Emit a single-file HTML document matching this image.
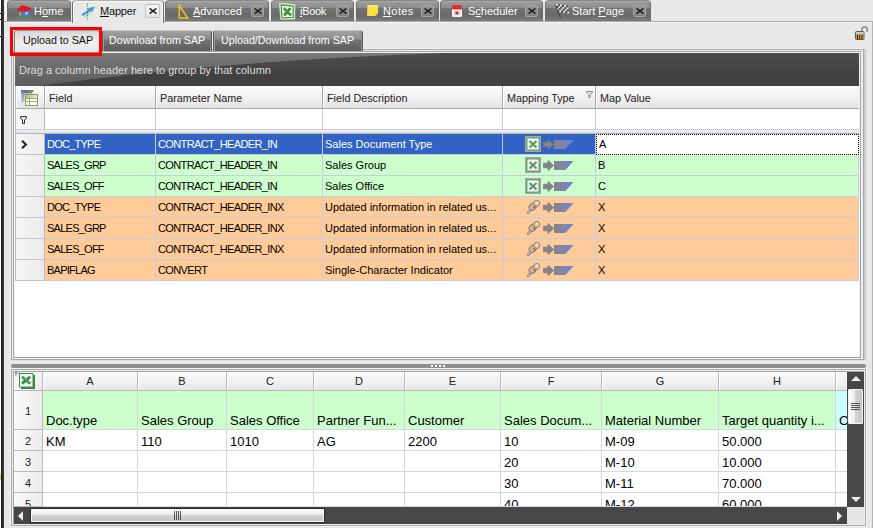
<!DOCTYPE html>
<html><head><meta charset="utf-8"><title>Mapper</title>
<style>
*{box-sizing:border-box;margin:0;padding:0}
html,body{width:873px;height:528px;overflow:hidden;background:#e8e8e8;font-family:"Liberation Sans",sans-serif;font-size:11px;color:#111}
.a{position:absolute}
u{text-decoration:underline;text-underline-offset:1px}
.tab{position:absolute;top:0;height:21px;border:1px solid #6c6c6c;border-top-color:#868686;border-bottom:none;border-radius:4px 4px 0 0;
 background:linear-gradient(#b6b6b6 0,#9c9c9c 1px,#8b8b8b 7px,#737373 7px,#696969 14px,#7b7b7b 20px);color:#fff;white-space:nowrap}
.tab .t{position:absolute;top:3px;line-height:14px;font-size:11px}
.tab.act{background:#e8e8e8;border-color:#6e6e6e;border-top-color:#b0b0b0;box-shadow:inset 1px 1px 0 #f8f8f8,inset -1px 0 0 #f8f8f8;color:#111;height:23px}
.xb{position:absolute;top:4px;width:13px;height:12px;border:1px solid #a4a4a4;border-radius:2px;background:linear-gradient(#979797,#828282)}
.tab.act .xb{background:linear-gradient(#f4f4f4,#e6e6e6);border-color:#c2c2c2;width:15px;height:14px;top:3px}
.xb svg{position:absolute;left:1.5px;top:2px}
.tab.act .xb svg{left:3px;top:3px}
.stab{position:absolute;top:30px;height:21px;border:1px solid #5e5e5e;border-top-color:#c4c4c4;border-bottom:none;border-radius:3px 3px 0 0;
 background:linear-gradient(#a2a2a2 0,#8c8c8c 8px,#747474 9px,#5e5e5e 19px);box-shadow:inset 1px 0 0 #9a9a9a,inset -1px 0 0 #888;color:#fff;line-height:18px;white-space:nowrap;font-size:10.7px}
.stab span{position:absolute;top:0}
.stab.act{background:linear-gradient(#c9cdcd 0,#dcdcdc 2px,#efefef 12px,#e6e6e6 20px);color:#111;border-color:#7c7c7c;border-top-color:#9aa0a0;box-shadow:none;height:23px}
.hd{position:absolute;top:86px;height:23px;background:linear-gradient(#fbfbfb,#f3f3f3 45%,#e3e3e3);border-right:1px solid #a9a9a9;border-bottom:1px solid #a9a9a9;line-height:25px;padding-left:4px;color:#222;white-space:nowrap;box-shadow:inset 1px 0 0 #fff;font-size:10.8px}
.fl{position:absolute;top:109px;height:21px;background:#fff;border-right:1px solid #c5cde0;border-bottom:1px solid #c5cde0}
.ind{position:absolute;left:16px;width:29px;height:21px;background:linear-gradient(90deg,#f6f6f6,#ebebeb);border-right:1px solid #b9b9b9;border-bottom:1px solid #c4c4c4}
.row{position:absolute;left:45px;width:814px;height:21px}
.c{position:absolute;top:0;height:21px;border-right:1px solid #c6cde0;border-bottom:1px solid #c6cde0;line-height:21px;padding-left:2px;white-space:nowrap;overflow:hidden;color:#000}
.g .c{background:#ccffcc}
.o .c{background:#ffcc99}
.s .c{background:#3163c5;color:#fff}
.c1{left:0;width:111px}.c2{left:111px;width:167px}.c3{left:278px;width:180px}.c4{left:458px;width:93px}.c5{left:551px;width:263px}
.up{letter-spacing:-0.62px}
.c1.up{letter-spacing:-0.75px}
.sh{position:absolute;top:372px;height:19px;background:linear-gradient(#fafafa,#f2f2f2 50%,#e6e6e6);border-right:1px solid #b9b9b9;border-bottom:1px solid #b9b9b9;text-align:center;line-height:19px;font-size:11px;color:#222;box-shadow:inset 1px 0 0 #fff}
.rh{position:absolute;left:14px;width:29px;background:linear-gradient(90deg,#fafafa,#ececec);border-right:1px solid #b9b9b9;border-bottom:1px solid #b9b9b9;text-align:center;font-size:11px;color:#222;overflow:hidden}
.sc{position:absolute;border-right:1px solid #d0d7e5;border-bottom:1px solid #d0d7e5;font-size:13px;padding-left:3px;white-space:nowrap;overflow:hidden;color:#000;background:#fff}
.sc.g{background:#ccffcc}
</style></head><body>
<div class="a" style="left:0;top:0;width:1px;height:528px;background:#fff"></div>
<div class="a" style="left:1px;top:0;width:3px;height:528px;background:linear-gradient(90deg,#111,#2e2e2e 1px,#3c3c3c)"></div>
<div class="a" style="left:0;top:13px;width:2px;height:1px;background:#000"></div>
<div class="a" style="left:0;top:19px;width:2px;height:1px;background:#000"></div>
<div class="a" style="left:0;top:36px;width:2px;height:1px;background:#000"></div>
<div class="a" style="left:4px;top:0;width:3px;height:22px;background:linear-gradient(90deg,#e2e2e2,#f6f6f6 1px)"></div>
<div class="a" style="left:0;top:474px;width:1px;height:6px;background:#e6cf6a"></div>
<div class="a" style="left:4px;top:21px;width:869px;height:1px;background:#a8a8a8"></div>
<div class="a" style="left:4px;top:22px;width:868px;height:1px;background:#f6f6f6"></div>
<div class="a" style="left:872px;top:21px;width:1px;height:507px;background:#b4b4b4"></div>
<div class="tab" style="left:7px;width:64px"><svg class="a" style="left:9px;top:4px" width="14" height="13" viewBox="0 0 14 13"><path d="M0 5L5 0L14 3L13.5 5.5L8 7Z" fill="#e8131b"/><path d="M1 5.5L6 7.5L6 12L1 10Z" fill="#2d6ed0"/><path d="M6 7.5L12.5 5.5L12.5 10L6 12Z" fill="#3a86e0"/><path d="M2.2 6.5L4.5 7.4L4.5 11.2L2.2 10.3Z" fill="#f08a1a"/><path d="M8.5 7.5L10.5 6.8L10.5 9L8.5 9.6Z" fill="#cfe4fa"/><path d="M0.5 10.5L6 12.5L13 10.2L13 11.2L6 13L0.5 11.5Z" fill="#3fae3a"/></svg><span class="t" style="left:26px">H<u>o</u>me</span></div>
<div class="tab act" style="left:72px;width:92px"><svg class="a" style="left:8px;top:2px" width="16" height="17" viewBox="0 0 16 17"><path d="M0 11.5L7 7L6 5.5L14 3.5L11 9.5L10 8L2 13Z" fill="#4a9bd6"/><path d="M3 14L10 10" stroke="#9cc6e8" stroke-width="1"/><path d="M6.5 0.5V17" stroke="#35b857" stroke-width="1.1" stroke-dasharray="1.4 0.8"/></svg><span class="t" style="left:27px"><span style="letter-spacing:-0.2px"><u>M</u>apper</span></span><span class="xb" style="left:72px"><svg width="8" height="6" viewBox="0 0 8 6"><path d="M0.6 0.4L7.4 5.6M7.4 0.4L0.6 5.6" stroke="#1c1c1c" stroke-width="1.5" fill="none"/></svg></span></div>
<div class="tab" style="left:165px;width:104px"><svg class="a" style="left:12px;top:3px" width="11" height="15" viewBox="0 0 11 15"><path d="M1.2 1.5L9.8 14L1.2 14Z" fill="none" stroke="#ecc522" stroke-width="1.5" stroke-linejoin="miter"/></svg><span class="t" style="left:27px"><u>A</u>dvanced</span><span class="xb" style="left:85px"><svg width="8" height="6" viewBox="0 0 8 6"><path d="M0.6 0.4L7.4 5.6M7.4 0.4L0.6 5.6" stroke="#1c1c1c" stroke-width="1.5" fill="none"/></svg></span></div>
<div class="tab" style="left:271px;width:83px"><svg class="a" style="left:7px;top:1px" width="17" height="18" viewBox="0 0 17 18"><path d="M0.5 1.2L15.8 2.6L15.8 17L1.6 17.2Z" fill="#f2f7f0" stroke="#d4e4d2" stroke-width="0.8"/><path d="M2.2 3L14.2 4.2L14.2 15.4L3 15.8Z" fill="#fbfdfa" stroke="#4a9a3c" stroke-width="1.3"/><path d="M4.8 6L12.2 13.4M11.4 6L5.2 13.4" stroke="#2e8c30" stroke-width="2.6"/><path d="M5.5 6L11.5 12" stroke="#86c886" stroke-width="0.7"/></svg><span class="t" style="left:28px"><span style="letter-spacing:-0.3px"><u>i</u>Book</span></span><span class="xb" style="left:64px"><svg width="8" height="6" viewBox="0 0 8 6"><path d="M0.6 0.4L7.4 5.6M7.4 0.4L0.6 5.6" stroke="#1c1c1c" stroke-width="1.5" fill="none"/></svg></span></div>
<div class="tab" style="left:356px;width:83px"><svg class="a" style="left:10px;top:4px" width="11" height="11" viewBox="0 0 11 11"><path d="M0.5 0H11V8.5L8.5 11H0Z" fill="#f8e244"/><path d="M11 8.5L8.5 11V8.5Z" fill="#c8a818"/><path d="M0.5 0H11V1.5H0.4Z" fill="#fbee8a"/></svg><span class="t" style="left:26px"><span style="letter-spacing:0.4px"><u>N</u>otes</span></span><span class="xb" style="left:64px"><svg width="8" height="6" viewBox="0 0 8 6"><path d="M0.6 0.4L7.4 5.6M7.4 0.4L0.6 5.6" stroke="#1c1c1c" stroke-width="1.5" fill="none"/></svg></span></div>
<div class="tab" style="left:440px;width:103px"><svg class="a" style="left:11px;top:4px" width="10" height="12" viewBox="0 0 10 12"><rect x="0" y="0" width="10" height="12" rx="1.2" fill="#f4f4f4"/><rect x="0" y="0" width="10" height="4.5" rx="1.2" fill="#e0302c"/><rect x="2.5" y="6" width="5" height="4" fill="#d99"/><rect x="4" y="7" width="2" height="2" fill="#a33"/></svg><span class="t" style="left:27px">S<u>c</u>heduler</span><span class="xb" style="left:84px"><svg width="8" height="6" viewBox="0 0 8 6"><path d="M0.6 0.4L7.4 5.6M7.4 0.4L0.6 5.6" stroke="#1c1c1c" stroke-width="1.5" fill="none"/></svg></span></div>
<div class="tab" style="left:545px;width:106px"><svg class="a" style="left:8px;top:2px" width="16" height="16" viewBox="0 0 16 16"><rect x="2.0" y="1.0" width="2" height="2" fill="#e4e4e4"/><rect x="4.0" y="1.3" width="2" height="2" fill="#4a4a4a"/><rect x="6.0" y="1.6" width="2" height="2" fill="#e4e4e4"/><rect x="8.0" y="1.9" width="2" height="2" fill="#4a4a4a"/><rect x="10.0" y="2.2" width="2" height="2" fill="#e4e4e4"/><rect x="12.0" y="2.5" width="2" height="2" fill="#4a4a4a"/><rect x="2.4" y="3.0" width="2" height="2" fill="#4a4a4a"/><rect x="4.4" y="3.3" width="2" height="2" fill="#e4e4e4"/><rect x="6.4" y="3.6" width="2" height="2" fill="#4a4a4a"/><rect x="8.4" y="3.9" width="2" height="2" fill="#e4e4e4"/><rect x="10.4" y="4.2" width="2" height="2" fill="#4a4a4a"/><rect x="12.4" y="4.5" width="2" height="2" fill="#e4e4e4"/><rect x="2.8" y="5.0" width="2" height="2" fill="#e4e4e4"/><rect x="4.8" y="5.3" width="2" height="2" fill="#4a4a4a"/><rect x="6.8" y="5.6" width="2" height="2" fill="#e4e4e4"/><rect x="8.8" y="5.9" width="2" height="2" fill="#4a4a4a"/><rect x="10.8" y="6.2" width="2" height="2" fill="#e4e4e4"/><rect x="12.8" y="6.5" width="2" height="2" fill="#4a4a4a"/><rect x="3.2" y="7.0" width="2" height="2" fill="#4a4a4a"/><rect x="5.2" y="7.3" width="2" height="2" fill="#e4e4e4"/><rect x="7.2" y="7.6" width="2" height="2" fill="#4a4a4a"/><rect x="9.2" y="7.9" width="2" height="2" fill="#e4e4e4"/><rect x="11.2" y="8.2" width="2" height="2" fill="#4a4a4a"/><rect x="13.2" y="8.5" width="2" height="2" fill="#e4e4e4"/><path d="M1.5 2L6.5 15" stroke="#444" stroke-width="1.1"/></svg><span class="t" style="left:26px">Start <u>P</u>age</span><span class="xb" style="left:87px"><svg width="8" height="6" viewBox="0 0 8 6"><path d="M0.6 0.4L7.4 5.6M7.4 0.4L0.6 5.6" stroke="#1c1c1c" stroke-width="1.5" fill="none"/></svg></span></div>
<svg class="a" style="left:855px;top:26px" width="14" height="14" viewBox="0 0 14 14"><path d="M7 7V3.6A2.6 2.6 0 0 1 12.2 3.6V6" fill="none" stroke="#8a8a8a" stroke-width="1.5"/><rect x="0.5" y="5.5" width="8.5" height="8" rx="1" fill="#9a9a9a" stroke="#5a5a5a"/><rect x="1" y="9" width="7.5" height="4" fill="#e8921a"/><path d="M2.5 9V13M4.7 9V13M6.9 9V13" stroke="#3a2a10" stroke-width="1"/><rect x="1" y="6" width="7.5" height="2" fill="#c9c9c9"/></svg>
<div class="a" style="left:10px;top:48px;width:855px;height:314px;border:1px solid #f0f0f0"></div>
<div class="a" style="left:11px;top:49px;width:853px;height:311px;border:1px solid #a8a8a8;background:#eee;box-shadow:1px 0 0 #c6c6c6,2px 0 0 #d4d4d4,3px 0 0 #dfdfdf,0 1px 0 #dcdcdc"></div>
<div class="a" style="left:13px;top:51px;width:848px;height:307px;border:1px solid #a4a4a4;background:#f2f2f2"></div>
<div class="a" style="left:15px;top:53px;width:844px;height:304px;background:#fff"></div>
<div class="stab act" style="left:14px;width:86px"><span style="left:8px">Upload to SAP</span></div>
<div class="stab" style="left:102px;width:110px"><span style="left:6px">Download from SAP</span></div>
<div class="stab" style="left:213px;width:150px"><span style="left:7px">Upload/Download from SAP</span></div>
<div class="a" style="left:15px;top:53px;width:844px;height:33px;background:linear-gradient(#4c4c4c,#404040 70%,#424242)"></div>
<svg class="a" style="left:15px;top:53px" width="844" height="33" viewBox="0 0 844 33"><defs><linearGradient id="gl" x1="0" x2="0" y1="0" y2="1"><stop offset="0" stop-color="#787878"/><stop offset="1" stop-color="#5c5c5c"/></linearGradient></defs><path d="M0 0H430Q200 8 25 33H0Z" fill="url(#gl)"/></svg>
<div class="a" style="left:19px;top:53px;height:33px;line-height:34px;color:#dcdcdc;white-space:nowrap;font-size:11px">Drag a column header here to group by that column</div>
<div class="hd" style="left:16px;width:29px;border-top-left-radius:4px"></div>
<div class="hd" style="left:45px;width:111px">Field</div>
<div class="hd" style="left:156px;width:167px">Parameter Name</div>
<div class="hd" style="left:323px;width:180px">Field Description</div>
<div class="hd" style="left:503px;width:93px">Mapping Type</div>
<div class="hd" style="left:596px;width:263px;border-top-right-radius:4px;border-right:none">Map Value</div>
<div class="fl" style="left:16px;width:29px;background:linear-gradient(90deg,#f8f8f8,#ededed);border-right-color:#b9b9b9"></div>
<div class="fl" style="left:45px;width:111px"></div>
<div class="fl" style="left:156px;width:167px"></div>
<div class="fl" style="left:323px;width:180px"></div>
<div class="fl" style="left:503px;width:93px"></div>
<div class="fl" style="left:596px;width:263px;border-right:none"></div>
<div class="a" style="left:15px;top:86px;width:1px;height:195px;background:#bdbdbd"></div>
<svg class="a" style="left:21px;top:90px" width="17" height="16" viewBox="0 0 17 16"><defs><linearGradient id="hi1" x1="0" x2="1"><stop offset="0" stop-color="#5c6480"/><stop offset="1" stop-color="#8c8c8c"/></linearGradient><linearGradient id="hi2" x1="0" x2="0" y1="0" y2="1"><stop offset="0" stop-color="#7880c0"/><stop offset="1" stop-color="#c4c6d4"/></linearGradient><linearGradient id="hi3" x1="0" x2="1"><stop offset="0" stop-color="#b4c070"/><stop offset="1" stop-color="#ecebc4"/></linearGradient></defs><path d="M0 0H13L11 3.5H0Z" fill="url(#hi1)"/><path d="M0.5 1H3.5V11L0.5 13.5Z" fill="url(#hi2)"/><rect x="4.5" y="4.5" width="12" height="11" fill="#fcfcf6" stroke="#8c9c66"/><rect x="5" y="5" width="11" height="3.2" fill="url(#hi3)"/><path d="M5 11.5H16M8.5 8.2V15" stroke="#9aa884" stroke-width="1"/><path d="M5 8.5H16" stroke="#8c9c66" stroke-width="0.8"/></svg>
<svg class="a" style="left:20px;top:116px" width="7" height="8" viewBox="0 0 7 8"><path d="M0.6 0.6H6.4V2L4.5 4V7.4H2.5V4L0.6 2Z" fill="#fff" stroke="#222" stroke-width="1"/></svg>
<svg class="a" style="left:586px;top:91px" width="7" height="7" viewBox="0 0 7 7"><path d="M0.5 0.5H6.5V1.5L4.3 3.5V6.5H2.7V3.5L0.5 1.5Z" fill="#e4e4e4" stroke="#8e8e8e" stroke-width="1"/></svg>
<div class="a" style="left:16px;top:130px;width:843px;height:4px;background:linear-gradient(#f0f0f0,#e0e0e0);border-bottom:1px solid #b4b4b4"></div>
<div class="ind" style="top:134px"></div>
<div class="row s" style="top:134px"><div class="c c1 up">DOC_TYPE</div><div class="c c2 up">CONTRACT_HEADER_IN</div><div class="c c3">Sales Document Type</div><div class="c c4"><svg class="a" style="left:22px;top:2px" width="16" height="16" viewBox="0 0 16 16"><rect x="0.5" y="0.5" width="15" height="15" fill="#7f9a82" stroke="#9db09f"/><rect x="2.5" y="2.5" width="11" height="11" fill="#f2f5f0"/><path d="M4.5 5L11.5 11.5M11.5 5L4.5 11.5" stroke="#4f9a5c" stroke-width="2"/></svg><svg class="a" style="left:40px;top:5px" width="11" height="11" viewBox="0 0 11 11"><path d="M0.4 3.2H5V0.4L10.6 5.5L5 10.6V7.8H0.4Z" fill="#858585" stroke="#74748a" stroke-width="0.7"/></svg><svg class="a" style="left:51px;top:6px" width="20" height="9" viewBox="0 0 20 9"><defs><linearGradient id="fg0" x1="0" x2="1"><stop offset="0" stop-color="#83838d"/><stop offset="0.45" stop-color="#8284a6"/><stop offset="1" stop-color="#6a86d8"/></linearGradient></defs><path d="M0 0H19.5L11.5 9H0Z" fill="url(#fg0)"/></svg></div><div class="c c5" style="background:#fff;color:#000;border:1px dotted #000;line-height:19px;padding-left:2px">A</div></div>
<div class="ind" style="top:155px"></div>
<div class="row g" style="top:155px"><div class="c c1 up">SALES_GRP</div><div class="c c2 up">CONTRACT_HEADER_IN</div><div class="c c3">Sales Group</div><div class="c c4"><svg class="a" style="left:22px;top:2px" width="16" height="16" viewBox="0 0 16 16"><rect x="0.5" y="0.5" width="15" height="15" fill="#7f9a82" stroke="#9db09f"/><rect x="2.5" y="2.5" width="11" height="11" fill="#f2f5f0"/><path d="M4.5 5L11.5 11.5M11.5 5L4.5 11.5" stroke="#4f9a5c" stroke-width="2"/></svg><svg class="a" style="left:40px;top:5px" width="11" height="11" viewBox="0 0 11 11"><path d="M0.4 3.2H5V0.4L10.6 5.5L5 10.6V7.8H0.4Z" fill="#858585" stroke="#74748a" stroke-width="0.7"/></svg><svg class="a" style="left:51px;top:6px" width="20" height="9" viewBox="0 0 20 9"><defs><linearGradient id="fg1" x1="0" x2="1"><stop offset="0" stop-color="#83838d"/><stop offset="0.45" stop-color="#8284a6"/><stop offset="1" stop-color="#6a86d8"/></linearGradient></defs><path d="M0 0H19.5L11.5 9H0Z" fill="url(#fg1)"/></svg></div><div class="c c5">B</div></div>
<div class="ind" style="top:176px"></div>
<div class="row g" style="top:176px"><div class="c c1 up">SALES_OFF</div><div class="c c2 up">CONTRACT_HEADER_IN</div><div class="c c3">Sales Office</div><div class="c c4"><svg class="a" style="left:22px;top:2px" width="16" height="16" viewBox="0 0 16 16"><rect x="0.5" y="0.5" width="15" height="15" fill="#7f9a82" stroke="#9db09f"/><rect x="2.5" y="2.5" width="11" height="11" fill="#f2f5f0"/><path d="M4.5 5L11.5 11.5M11.5 5L4.5 11.5" stroke="#4f9a5c" stroke-width="2"/></svg><svg class="a" style="left:40px;top:5px" width="11" height="11" viewBox="0 0 11 11"><path d="M0.4 3.2H5V0.4L10.6 5.5L5 10.6V7.8H0.4Z" fill="#858585" stroke="#74748a" stroke-width="0.7"/></svg><svg class="a" style="left:51px;top:6px" width="20" height="9" viewBox="0 0 20 9"><defs><linearGradient id="fg2" x1="0" x2="1"><stop offset="0" stop-color="#83838d"/><stop offset="0.45" stop-color="#8284a6"/><stop offset="1" stop-color="#6a86d8"/></linearGradient></defs><path d="M0 0H19.5L11.5 9H0Z" fill="url(#fg2)"/></svg></div><div class="c c5">C</div></div>
<div class="ind" style="top:197px"></div>
<div class="row o" style="top:197px"><div class="c c1 up">DOC_TYPE</div><div class="c c2 up">CONTRACT_HEADER_INX</div><div class="c c3">Updated information in related us...</div><div class="c c4"><svg class="a" style="left:24px;top:3px" width="14" height="14" viewBox="0 0 14 14"><path d="M0.9 13.1L4.4 9.4" stroke="#7c74a0" stroke-width="2.4" stroke-linecap="round"/><path d="M1 13L4.2 9.6" stroke="#f4ead0" stroke-width="1" stroke-linecap="round"/><ellipse cx="5.7" cy="6.7" rx="3.9" ry="3.1" transform="rotate(-40 5.7 6.7)" fill="#dbb976" stroke="#7c7498" stroke-width="1"/><circle cx="9.7" cy="3.4" r="3" fill="#e9cf96" stroke="#7c7498" stroke-width="1"/><path d="M6.2 6.3L8.6 8.2" stroke="#7a6a58" stroke-width="1.1"/><circle cx="10.3" cy="2.6" r="1.1" fill="#f6e8c4"/></svg><svg class="a" style="left:40px;top:5px" width="11" height="11" viewBox="0 0 11 11"><path d="M0.4 3.2H5V0.4L10.6 5.5L5 10.6V7.8H0.4Z" fill="#858585" stroke="#74748a" stroke-width="0.7"/></svg><svg class="a" style="left:51px;top:6px" width="20" height="9" viewBox="0 0 20 9"><defs><linearGradient id="fg3" x1="0" x2="1"><stop offset="0" stop-color="#83838d"/><stop offset="0.45" stop-color="#8284a6"/><stop offset="1" stop-color="#6a86d8"/></linearGradient></defs><path d="M0 0H19.5L11.5 9H0Z" fill="url(#fg3)"/></svg></div><div class="c c5">X</div></div>
<div class="ind" style="top:218px"></div>
<div class="row o" style="top:218px"><div class="c c1 up">SALES_GRP</div><div class="c c2 up">CONTRACT_HEADER_INX</div><div class="c c3">Updated information in related us...</div><div class="c c4"><svg class="a" style="left:24px;top:3px" width="14" height="14" viewBox="0 0 14 14"><path d="M0.9 13.1L4.4 9.4" stroke="#7c74a0" stroke-width="2.4" stroke-linecap="round"/><path d="M1 13L4.2 9.6" stroke="#f4ead0" stroke-width="1" stroke-linecap="round"/><ellipse cx="5.7" cy="6.7" rx="3.9" ry="3.1" transform="rotate(-40 5.7 6.7)" fill="#dbb976" stroke="#7c7498" stroke-width="1"/><circle cx="9.7" cy="3.4" r="3" fill="#e9cf96" stroke="#7c7498" stroke-width="1"/><path d="M6.2 6.3L8.6 8.2" stroke="#7a6a58" stroke-width="1.1"/><circle cx="10.3" cy="2.6" r="1.1" fill="#f6e8c4"/></svg><svg class="a" style="left:40px;top:5px" width="11" height="11" viewBox="0 0 11 11"><path d="M0.4 3.2H5V0.4L10.6 5.5L5 10.6V7.8H0.4Z" fill="#858585" stroke="#74748a" stroke-width="0.7"/></svg><svg class="a" style="left:51px;top:6px" width="20" height="9" viewBox="0 0 20 9"><defs><linearGradient id="fg4" x1="0" x2="1"><stop offset="0" stop-color="#83838d"/><stop offset="0.45" stop-color="#8284a6"/><stop offset="1" stop-color="#6a86d8"/></linearGradient></defs><path d="M0 0H19.5L11.5 9H0Z" fill="url(#fg4)"/></svg></div><div class="c c5">X</div></div>
<div class="ind" style="top:239px"></div>
<div class="row o" style="top:239px"><div class="c c1 up">SALES_OFF</div><div class="c c2 up">CONTRACT_HEADER_INX</div><div class="c c3">Updated information in related us...</div><div class="c c4"><svg class="a" style="left:24px;top:3px" width="14" height="14" viewBox="0 0 14 14"><path d="M0.9 13.1L4.4 9.4" stroke="#7c74a0" stroke-width="2.4" stroke-linecap="round"/><path d="M1 13L4.2 9.6" stroke="#f4ead0" stroke-width="1" stroke-linecap="round"/><ellipse cx="5.7" cy="6.7" rx="3.9" ry="3.1" transform="rotate(-40 5.7 6.7)" fill="#dbb976" stroke="#7c7498" stroke-width="1"/><circle cx="9.7" cy="3.4" r="3" fill="#e9cf96" stroke="#7c7498" stroke-width="1"/><path d="M6.2 6.3L8.6 8.2" stroke="#7a6a58" stroke-width="1.1"/><circle cx="10.3" cy="2.6" r="1.1" fill="#f6e8c4"/></svg><svg class="a" style="left:40px;top:5px" width="11" height="11" viewBox="0 0 11 11"><path d="M0.4 3.2H5V0.4L10.6 5.5L5 10.6V7.8H0.4Z" fill="#858585" stroke="#74748a" stroke-width="0.7"/></svg><svg class="a" style="left:51px;top:6px" width="20" height="9" viewBox="0 0 20 9"><defs><linearGradient id="fg5" x1="0" x2="1"><stop offset="0" stop-color="#83838d"/><stop offset="0.45" stop-color="#8284a6"/><stop offset="1" stop-color="#6a86d8"/></linearGradient></defs><path d="M0 0H19.5L11.5 9H0Z" fill="url(#fg5)"/></svg></div><div class="c c5">X</div></div>
<div class="ind" style="top:260px"></div>
<div class="row o" style="top:260px"><div class="c c1 up">BAPIFLAG</div><div class="c c2 up">CONVERT</div><div class="c c3">Single-Character Indicator</div><div class="c c4"><svg class="a" style="left:24px;top:3px" width="14" height="14" viewBox="0 0 14 14"><path d="M0.9 13.1L4.4 9.4" stroke="#7c74a0" stroke-width="2.4" stroke-linecap="round"/><path d="M1 13L4.2 9.6" stroke="#f4ead0" stroke-width="1" stroke-linecap="round"/><ellipse cx="5.7" cy="6.7" rx="3.9" ry="3.1" transform="rotate(-40 5.7 6.7)" fill="#dbb976" stroke="#7c7498" stroke-width="1"/><circle cx="9.7" cy="3.4" r="3" fill="#e9cf96" stroke="#7c7498" stroke-width="1"/><path d="M6.2 6.3L8.6 8.2" stroke="#7a6a58" stroke-width="1.1"/><circle cx="10.3" cy="2.6" r="1.1" fill="#f6e8c4"/></svg><svg class="a" style="left:40px;top:5px" width="11" height="11" viewBox="0 0 11 11"><path d="M0.4 3.2H5V0.4L10.6 5.5L5 10.6V7.8H0.4Z" fill="#858585" stroke="#74748a" stroke-width="0.7"/></svg><svg class="a" style="left:51px;top:6px" width="20" height="9" viewBox="0 0 20 9"><defs><linearGradient id="fg6" x1="0" x2="1"><stop offset="0" stop-color="#83838d"/><stop offset="0.45" stop-color="#8284a6"/><stop offset="1" stop-color="#6a86d8"/></linearGradient></defs><path d="M0 0H19.5L11.5 9H0Z" fill="url(#fg6)"/></svg></div><div class="c c5">X</div></div>
<svg class="a" style="left:21px;top:140px" width="7" height="9" viewBox="0 0 7 9"><path d="M1 0.8L5 4.5L1 8.2" fill="none" stroke="#1a1a1a" stroke-width="1.9"/></svg>
<div class="a" style="left:11px;top:364px;width:855px;height:4px;background:#8e8e8e;border-radius:2px"></div>
<div class="a" style="left:431px;top:365px;width:15px;height:2px;background:repeating-linear-gradient(90deg,#fff 0,#fff 2px,transparent 2px,transparent 4px)"></div>
<div class="a" style="left:10px;top:368px;width:857px;height:159px;border:1px solid #f2f2f2"></div>
<div class="a" style="left:11px;top:369px;width:855px;height:157px;border:1px solid #a8a8a8;background:#eee"></div>
<div class="a" style="left:13px;top:371px;width:851px;height:153px;border:1px solid #a4a4a4;background:#fff"></div>
<div class="sh" style="left:14px;width:29px;background:linear-gradient(135deg,#555 0,#f4f4f4 5px,#f6f6f6 50%,#e8e8e8)"></div>
<div class="sh" style="left:43px;width:95px">A</div>
<div class="sh" style="left:138px;width:89px">B</div>
<div class="sh" style="left:227px;width:87px">C</div>
<div class="sh" style="left:314px;width:91px">D</div>
<div class="sh" style="left:405px;width:96px">E</div>
<div class="sh" style="left:501px;width:101px">F</div>
<div class="sh" style="left:602px;width:117px">G</div>
<div class="sh" style="left:719px;width:117px">H</div>
<div class="sh" style="left:836px;width:11px;border-right:none"></div>
<div class="rh" style="top:391px;height:39px;line-height:41px">1</div>
<div class="sc g" style="left:43px;top:391px;width:95px;height:39px;padding-top:21px;line-height:17px">Doc.type</div>
<div class="sc g" style="left:138px;top:391px;width:89px;height:39px;padding-top:21px;line-height:17px">Sales Group</div>
<div class="sc g" style="left:227px;top:391px;width:87px;height:39px;padding-top:21px;line-height:17px">Sales Office</div>
<div class="sc g" style="left:314px;top:391px;width:91px;height:39px;padding-top:21px;line-height:17px">Partner Fun...</div>
<div class="sc g" style="left:405px;top:391px;width:96px;height:39px;padding-top:21px;line-height:17px">Customer</div>
<div class="sc g" style="left:501px;top:391px;width:101px;height:39px;padding-top:21px;line-height:17px">Sales Docum...</div>
<div class="sc g" style="left:602px;top:391px;width:117px;height:39px;padding-top:21px;line-height:17px">Material Number</div>
<div class="sc g" style="left:719px;top:391px;width:117px;height:39px;padding-top:21px;line-height:17px">Target quantity i...</div>
<div class="sc g" style="left:836px;top:391px;width:11px;height:39px;padding-top:21px;line-height:17px;background:#ccffff;border-right:none;padding-left:3px">C</div>
<div class="rh" style="top:430px;height:21px;line-height:23px">2</div>
<div class="sc" style="left:43px;top:430px;width:95px;height:21px;line-height:24px">KM</div>
<div class="sc" style="left:138px;top:430px;width:89px;height:21px;line-height:24px">110</div>
<div class="sc" style="left:227px;top:430px;width:87px;height:21px;line-height:24px">1010</div>
<div class="sc" style="left:314px;top:430px;width:91px;height:21px;line-height:24px">AG</div>
<div class="sc" style="left:405px;top:430px;width:96px;height:21px;line-height:24px">2200</div>
<div class="sc" style="left:501px;top:430px;width:101px;height:21px;line-height:24px">10</div>
<div class="sc" style="left:602px;top:430px;width:117px;height:21px;line-height:24px">M-09</div>
<div class="sc" style="left:719px;top:430px;width:117px;height:21px;line-height:24px">50.000</div>
<div class="sc" style="left:836px;top:430px;width:11px;height:21px;line-height:24px;border-right:none;padding-left:3px"></div>
<div class="rh" style="top:451px;height:21px;line-height:23px">3</div>
<div class="sc" style="left:43px;top:451px;width:95px;height:21px;line-height:24px"></div>
<div class="sc" style="left:138px;top:451px;width:89px;height:21px;line-height:24px"></div>
<div class="sc" style="left:227px;top:451px;width:87px;height:21px;line-height:24px"></div>
<div class="sc" style="left:314px;top:451px;width:91px;height:21px;line-height:24px"></div>
<div class="sc" style="left:405px;top:451px;width:96px;height:21px;line-height:24px"></div>
<div class="sc" style="left:501px;top:451px;width:101px;height:21px;line-height:24px">20</div>
<div class="sc" style="left:602px;top:451px;width:117px;height:21px;line-height:24px">M-10</div>
<div class="sc" style="left:719px;top:451px;width:117px;height:21px;line-height:24px">10.000</div>
<div class="sc" style="left:836px;top:451px;width:11px;height:21px;line-height:24px;border-right:none;padding-left:3px"></div>
<div class="rh" style="top:472px;height:21px;line-height:23px">4</div>
<div class="sc" style="left:43px;top:472px;width:95px;height:21px;line-height:24px"></div>
<div class="sc" style="left:138px;top:472px;width:89px;height:21px;line-height:24px"></div>
<div class="sc" style="left:227px;top:472px;width:87px;height:21px;line-height:24px"></div>
<div class="sc" style="left:314px;top:472px;width:91px;height:21px;line-height:24px"></div>
<div class="sc" style="left:405px;top:472px;width:96px;height:21px;line-height:24px"></div>
<div class="sc" style="left:501px;top:472px;width:101px;height:21px;line-height:24px">30</div>
<div class="sc" style="left:602px;top:472px;width:117px;height:21px;line-height:24px">M-11</div>
<div class="sc" style="left:719px;top:472px;width:117px;height:21px;line-height:24px">70.000</div>
<div class="sc" style="left:836px;top:472px;width:11px;height:21px;line-height:24px;border-right:none;padding-left:3px"></div>
<div class="rh" style="top:493px;height:14px;line-height:23px">5</div>
<div class="sc" style="left:43px;top:493px;width:95px;height:14px;line-height:24px"></div>
<div class="sc" style="left:138px;top:493px;width:89px;height:14px;line-height:24px"></div>
<div class="sc" style="left:227px;top:493px;width:87px;height:14px;line-height:24px"></div>
<div class="sc" style="left:314px;top:493px;width:91px;height:14px;line-height:24px"></div>
<div class="sc" style="left:405px;top:493px;width:96px;height:14px;line-height:24px"></div>
<div class="sc" style="left:501px;top:493px;width:101px;height:14px;line-height:24px">40</div>
<div class="sc" style="left:602px;top:493px;width:117px;height:14px;line-height:24px">M-12</div>
<div class="sc" style="left:719px;top:493px;width:117px;height:14px;line-height:24px">60.000</div>
<div class="sc" style="left:836px;top:493px;width:11px;height:14px;line-height:24px;border-right:none;padding-left:3px"></div>
<svg class="a" style="left:19px;top:373px" width="16" height="16" viewBox="0 0 16 16"><rect x="2" y="2" width="14" height="14" fill="#3c8646"/><rect x="0.5" y="0.5" width="13.5" height="13.5" fill="#f8fbf6" stroke="#3d8f48"/><path d="M3 3.8L11.2 10.6M11.2 3.8L3 10.6" stroke="#2f8f3e" stroke-width="2.7"/><path d="M3.4 3.6L11 10" stroke="#8fcf98" stroke-width="0.7"/></svg>
<div class="a" style="left:847px;top:372px;width:17px;height:135px;background:#474747"></div>
<div class="a" style="left:848px;top:389px;width:15px;height:35px;background:linear-gradient(90deg,#fdfdfd 0,#ececec 45%,#d2d2d2 50%,#c6c6c6 100%);border:1px solid #f4f4f4;border-radius:1px"></div>
<div class="a" style="left:851px;top:403px;width:9px;height:8px;background:repeating-linear-gradient(#555 0,#555 1px,transparent 1px,transparent 2px)"></div>
<svg class="a" style="left:851px;top:376px" width="10" height="5" viewBox="0 0 10 5"><path d="M0 5L5 0L10 5Z" fill="#ececec"/></svg>
<svg class="a" style="left:851px;top:497px" width="10" height="5" viewBox="0 0 10 5"><path d="M0 0L5 5L10 0Z" fill="#ececec"/></svg>
<div class="a" style="left:14px;top:507px;width:833px;height:17px;background:#474747"></div>
<div class="a" style="left:847px;top:507px;width:17px;height:17px;background:#e6e6e6"></div>
<div class="a" style="left:30px;top:508px;width:295px;height:15px;background:linear-gradient(#fdfdfd 0,#ececec 45%,#d2d2d2 50%,#c6c6c6 100%);border:1px solid #2c2c2c;box-shadow:inset 0 0 0 1px #f6f6f6"></div>
<div class="a" style="left:174px;top:511px;width:8px;height:9px;background:repeating-linear-gradient(90deg,#555 0,#555 1px,transparent 1px,transparent 2px)"></div>
<svg class="a" style="left:18px;top:511px" width="5" height="10" viewBox="0 0 5 10"><path d="M5 0L0 5L5 10Z" fill="#ececec"/></svg>
<svg class="a" style="left:837px;top:511px" width="5" height="10" viewBox="0 0 5 10"><path d="M0 0L5 5L0 10Z" fill="#ececec"/></svg>
<div class="a" style="left:13px;top:52px;width:86px;height:1px;background:#8c8c8c"></div>
<div class="a" style="left:10px;top:27px;width:92px;height:29px;border:3px solid #fb0007"></div>
</body></html>
